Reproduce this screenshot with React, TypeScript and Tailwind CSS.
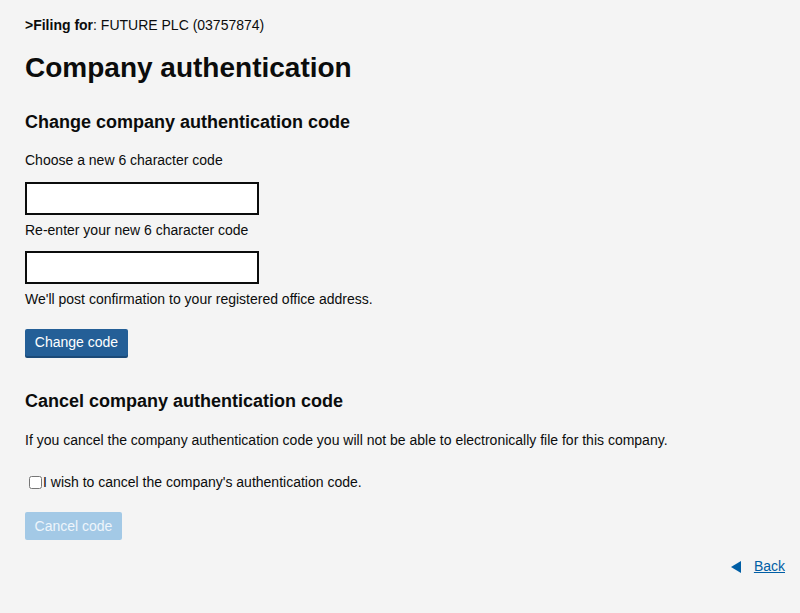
export default function App() {
  return (
    <div className="min-h-[613px] w-full bg-[#f4f4f4] px-[25px] pt-[17px] font-['Liberation_Sans',Arial,sans-serif] text-[14px] text-[#0b0c0c]">
      <p className="leading-[16px]">
        <strong>&gt;Filing for</strong>: FUTURE PLC (03757874)
      </p>

      <h1 className="mt-[19px] text-[28px] font-bold leading-[32px]">Company authentication</h1>

      <h2 className="mt-[27px] text-[18px] font-bold leading-[22px]">Change company authentication code</h2>

      <form onSubmit={(e) => e.preventDefault()}>
        <label className="mt-[19px] block leading-[16px]">Choose a new 6 character code</label>
        <input
          type="text"
          maxLength={6}
          className="mt-[14px] block h-[33px] w-[234px] border-2 border-[#0b0c0c] bg-white px-1 outline-none"
        />
        <label className="mt-[7px] block leading-[16px]">Re-enter your new 6 character code</label>
        <input
          type="text"
          maxLength={6}
          className="mt-[13px] block h-[33px] w-[234px] border-2 border-[#0b0c0c] bg-white px-1 outline-none"
        />
        <p className="mt-[7px] leading-[16px]">We'll post confirmation to your registered office address.</p>

        <button
          type="submit"
          className="mt-[22px] block h-[27px] w-[103px] rounded-[2px] bg-[#245f97] text-[14px] leading-[27px] text-white shadow-[0_2px_0_#1b4a78]"
        >
          Change code
        </button>
      </form>

      <h2 className="mt-[34px] text-[18px] font-bold leading-[22px]">Cancel company authentication code</h2>

      <p className="mt-[20px] leading-[16px]">
        If you cancel the company authentication code you will not be able to electronically file for this company.
      </p>

      <label className="mt-[26px] flex items-center leading-[16px]">
        <input type="checkbox" className="ml-[4px] mr-[1px] h-[13px] w-[13px] accent-[#245f97]" />
        I wish to cancel the company's authentication code.
      </label>

      <button
        type="button"
        disabled
        className="mt-[22px] block h-[28px] w-[97px] rounded-[2px] bg-[#a3c9e6] text-[14px] leading-[28px] text-[#eef5fb]"
      >
        Cancel code
      </button>

      <div className="-mr-[10px] mt-[16px] flex justify-end">
        <a href="#" className="flex items-center gap-[13px] text-[14px] text-[#005ea5] underline">
          <svg width="10" height="12" viewBox="0 0 10 12" aria-hidden="true">
            <path d="M10 0 L0 6 L10 12 Z" fill="#005ea5" />
          </svg>
          Back
        </a>
      </div>
    </div>
  );
}
